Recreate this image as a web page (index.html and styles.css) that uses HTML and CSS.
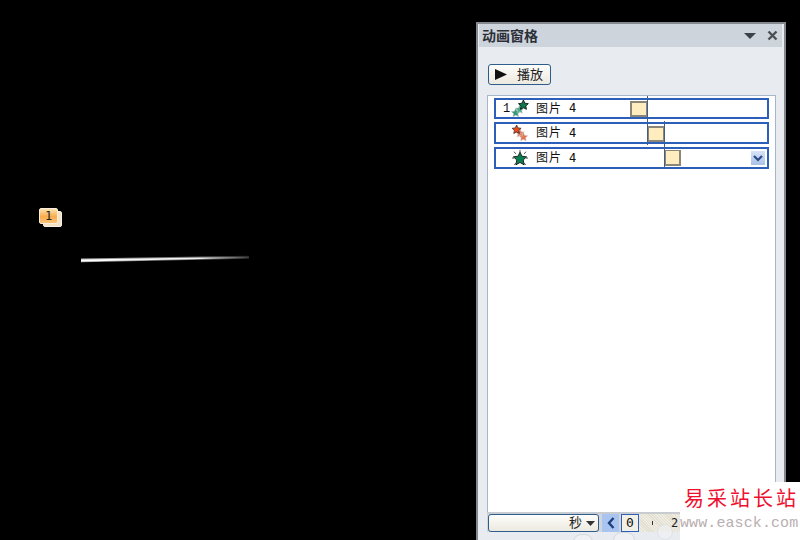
FILE: index.html
```html
<!DOCTYPE html>
<html lang="zh">
<head>
<meta charset="utf-8">
<title>动画窗格</title>
<link rel="stylesheet" href="styles.css">
</head>
<body>
<main class="desktop">
  <div class="badge-back"></div>
  <div class="badge">1</div>
  <svg class="streak" width="180" height="8" viewBox="0 0 180 8">
    <defs>
      <linearGradient id="streakFill" x1="0" x2="1" y1="0" y2="0">
        <stop offset="0" stop-color="#ffffff"/>
        <stop offset="0.7" stop-color="#f0f0f0"/>
        <stop offset="1" stop-color="#3a3a3a"/>
      </linearGradient>
      <linearGradient id="streakEdge" x1="0" x2="1" y1="0" y2="0">
        <stop offset="0" stop-color="#a8a8a8"/>
        <stop offset="0.7" stop-color="#707070"/>
        <stop offset="1" stop-color="#222"/>
      </linearGradient>
    </defs>
    <polygon points="1,3.600 169,0.800 169,3.800 1,7.200" fill="url(#streakEdge)"/>
    <polygon points="1,4.500 169,1.800 169,3 1,6.400" fill="url(#streakFill)"/>
  </svg>

  <section class="pane">
    <header class="pane-title">
      <span class="pane-name">动画窗格</span>
      <svg class="pane-menu" width="14" height="8" viewBox="0 0 14 8"><polygon points="1,1 13,1 7,7" fill="#3c4048"/></svg>
      <svg class="pane-close" width="11" height="11" viewBox="0 0 11 11"><path d="M1.5 1.5 9.5 9.5M9.5 1.5 1.5 9.5" stroke="#4a4e55" stroke-width="2.4"/></svg>
    </header>
    <div class="pane-body">
      <button class="play-btn" type="button">
        <svg width="14" height="11" viewBox="0 0 14 11"><polygon points="1,0 13,5.5 1,11" fill="#111"/></svg>
        <span>播放</span>
      </button>
      <div class="list">
        <div class="row row-first">
          <span class="num">1</span>
          <svg class="ico" viewBox="0 0 20 20">
            <polygon points="5,10 6.500,13.300 10,13.700 7.500,16 8.200,19.500 5,17.700 1.800,19.500 2.500,16 0,13.700 3.500,13.300" fill="#2f9b72" stroke="#a6b4bc" stroke-width="0.6"/>
            <polygon points="9.500,6 11,9.300 14.500,9.700 12,12 12.700,15.500 9.500,13.700 6.300,15.500 7,12 4.500,9.700 8,9.300" fill="#52ad8b" stroke="#b5c2c8" stroke-width="0.5"/>
            <polygon points="14,0 15.700,3.800 19.800,4.300 16.800,7 17.600,11 14,9 10.400,11 11.200,7 8.200,4.300 12.300,3.800" fill="#0d7a4e" stroke="#111" stroke-width="1"/>
          </svg>
          <span class="label">图片</span><span class="digit">4</span>
          <span class="block block-1"></span>
        </div>
        <div class="row">
          <span class="num"></span>
          <svg class="ico" viewBox="0 0 20 20">
            <polygon points="14,9 15.500,12.300 19,12.700 16.500,15 17.200,18.500 14,16.700 10.800,18.500 11.500,15 9,12.700 12.500,12.300" fill="#e2734f" stroke="#c9b4ac" stroke-width="0.5"/>
            <polygon points="10,4.500 11.500,7.800 15,8.200 12.500,10.500 13.200,14 10,12.200 6.800,14 7.500,10.500 5,8.200 8.500,7.800" fill="#d98a70" stroke="#c9b4ac" stroke-width="0.5"/>
            <polygon points="6,0 7.600,3.400 11.300,3.900 8.600,6.300 9.300,10 6,8.200 2.700,10 3.400,6.300 0.700,3.900 4.400,3.400" fill="#ee4a1e" stroke="#222" stroke-width="0.8"/>
          </svg>
          <span class="label">图片</span><span class="digit">4</span>
          <span class="block block-2"></span>
        </div>
        <div class="row row-selected">
          <span class="num"></span>
          <svg class="ico" viewBox="0 0 20 20">
            <path d="M3 2 5 4.500M17 2 15 4.500M10 0V2.500M0.500 9.500H3M19.500 9.500H17M3 17.500 5 15.500M17 17.500 15 15.500" stroke="#333" stroke-width="1"/>
            <polygon points="10,2.500 12.300,7.300 17.800,8 13.800,11.700 14.900,17.500 10,14.700 5.100,17.500 6.200,11.700 2.200,8 7.700,7.300" fill="#0a7d50" stroke="#111" stroke-width="1"/>
          </svg>
          <span class="label">图片</span><span class="digit">4</span>
          <span class="block block-3"></span>
          <span class="row-arrow">
            <svg width="10" height="7" viewBox="0 0 10 7"><path d="M1 1 5 5 9 1" fill="none" stroke="#2c4a86" stroke-width="2.200"/></svg>
          </span>
        </div>
        <span class="tick tick-1"></span>
        <span class="tick tick-2"></span>
      </div>
      <footer class="timebar">
        <div class="unit-select">
          <span class="unit">秒</span>
          <svg width="9" height="5" viewBox="0 0 9 5"><polygon points="0,0 9,0 4.500,5" fill="#333"/></svg>
        </div>
        <span class="nav-btn">
          <svg width="8" height="12" viewBox="0 0 8 12"><path d="M6.500 1 2 6 6.500 11" fill="none" stroke="#1f3f7c" stroke-width="2.400"/></svg>
        </span>
        <span class="zero">0</span>
        <div class="ruler"><span class="ruler-tick"></span><span class="ruler-num">2</span></div>
      </footer>
      <div class="under">
        <span class="ghost ghost-a"></span>
        <span class="ghost ghost-b"></span>
        <span class="ghost ghost-c"></span>
      </div>
    </div>
  </section>

  <aside class="mark">
    <div class="mark-cn">易采站长站</div>
    <div class="mark-en">www.easck.com</div>
  </aside>
</main>
</body>
</html>
```
FILE: styles.css
```css
* { box-sizing: border-box; }
html, body { margin: 0; padding: 0; background: #000; }
.desktop {
  position: relative;
  width: 800px;
  height: 540px;
  overflow: hidden;
  background: #000;
  font-family: "Noto Sans CJK SC", "Liberation Sans", sans-serif;
}
.badge, .badge-back {
  position: absolute;
  width: 19px;
  height: 16px;
  border-radius: 2px;
}
.badge-back {
  left: 43px;
  top: 211px;
  background: #f6e3c4;
  border: 1px solid #f4f1ea;
}
.badge {
  left: 39px;
  top: 208px;
  border: 1px solid #fbeedb;
  background: linear-gradient(#fde2b0, #f9ab4c 55%, #fbc57a);
  color: #222;
  font: 12px/14px "DejaVu Sans Mono", monospace;
  text-align: center;
}
.streak { position: absolute; left: 80px; top: 255px; }

.pane {
  position: absolute;
  left: 476px;
  top: 22px;
  width: 310px;
  height: 540px;
  display: flex;
  flex-direction: column;
  padding: 2px 2px 0 3px;
  background: #e8ecf1;
  box-shadow: inset 0 2px 0 #85898f, inset 2px 0 0 #85898f, inset -2px 0 0 #85898f;
}
.pane-title {
  display: flex;
  align-items: center;
  height: 23px;
  margin-right: 2px;
  padding-left: 3px;
  background: #ced4dc;
}
.pane-name {
  flex: 1;
  padding-bottom: 2px;
  font-size: 14px;
  font-weight: 700;
  color: #2b3038;
}
.pane-menu { margin-right: 10px; }
.pane-close { margin-right: 4px; }
.pane-body {
  display: flex;
  flex-direction: column;
  flex: 1;
  padding: 17px 8px 0 8px;
}
.play-btn {
  display: flex;
  align-items: center;
  width: 63px;
  height: 21px;
  margin: 0 0 10px 1px;
  padding: 0 0 0 5px;
  border: 1px solid #2d5d8c;
  border-radius: 3px;
  background: linear-gradient(#fdfdfb, #ece9df);
  font: 13px/1 "Noto Sans CJK SC", sans-serif;
  color: #222;
}
.play-btn span { margin-left: 9px; padding-bottom: 2px; }
.list {
  position: relative;
  display: flex;
  flex-direction: column;
  gap: 3px;
  width: 289px;
  height: 417px;
  padding: 2px 6px 0 6px;
  background: #fff;
  border: 1px solid #a7b5c8;
  border-bottom: 0;
}
.row {
  position: relative;
  display: flex;
  align-items: center;
  height: 22px;
  border: 2px solid #2b5fb9;
  background: #fff;
  font-size: 12px;
  color: #111;
}
.row-first { height: 21px; }
.num {
  width: 15px;
  padding-left: 7px;
  font: 12px/1 "Liberation Mono", monospace;
}
.ico { width: 18px; height: 17px; flex: none; }
.label { margin-left: 7px; width: 33px; padding-bottom: 3px; letter-spacing: 1px; }
.digit { padding-bottom: 1px; font: 12px/1 "DejaVu Sans Mono", monospace; }
.block {
  position: absolute;
  width: 18px;
  height: 16px;
  background: #ffedc0;
  border: 2px solid #8a8678;
}
.block-1 { left: 134px; top: 1px; }
.block-2 { left: 151px; top: 2px; }
.block-3 { left: 168px; top: 1px; width: 17px; border-width: 1px 2px 2px; }
.row-arrow {
  position: absolute;
  right: 2px;
  top: 2px;
  display: flex;
  align-items: center;
  justify-content: center;
  width: 14px;
  height: 14px;
  background: linear-gradient(#d8e3f6, #a9c0e8);
}
.tick {
  position: absolute;
  width: 1px;
  background: #3f5f86;
}
.tick-1 { left: 159px; top: 0; height: 49px; }
.tick-2 { left: 176px; top: 25px; height: 48px; }
.timebar {
  display: flex;
  align-items: center;
  height: 20px;
  width: 289px;
  background: #d2d6da;
  border-top: 2px solid #c8ccd0;
}
.unit-select {
  display: flex;
  align-items: center;
  justify-content: flex-end;
  width: 111px;
  height: 18px;
  margin-left: 1px;
  padding-right: 3px;
  border: 1px solid #2d5d8c;
  border-radius: 3px;
  background: linear-gradient(#fdfdfb, #ece9df);
}
.unit { margin-right: 4px; padding-bottom: 3px; font-size: 13px; line-height: 1; color: #222; }
.nav-btn {
  display: flex;
  align-items: center;
  justify-content: center;
  width: 17px;
  height: 18px;
  margin-left: 3px;
  background: #a9c4f0;
}
.zero {
  width: 18px;
  height: 18px;
  margin-left: 2px;
  border: 1px solid #2b5fb9;
  background: #f2efe6;
  text-align: center;
  font: 13px/16px "DejaVu Sans Mono", monospace;
  color: #111;
}
.ruler {
  display: flex;
  align-items: center;
  flex: 1;
  height: 18px;
  background: repeating-linear-gradient(45deg, #efece2 0 1px, #e2ded2 1px 2px);
  font: 12px/1 "DejaVu Sans Mono", monospace;
  color: #222;
}
.ruler-tick { width: 1px; height: 4px; margin-left: 13px; background: #333; }
.ruler-num { margin-left: 18px; }
.under {
  position: relative;
  flex: 1;
  background: #e8ecf1;
}
.ghost {
  position: absolute;
  border: 1px solid #d4d8dc;
  border-radius: 8px 8px 0 0;
  background: #eef0f3;
}
.ghost-a { left: 86px; top: 2px; width: 20px; height: 12px; }
.ghost-b { left: 126px; top: 0; width: 22px; height: 14px; }
.ghost-c {
  left: 170px;
  top: -8px;
  width: 16px;
  height: 16px;
  border-radius: 50%;
  border-color: #dcdfe2;
  background: #f0f1f3;
  opacity: 0.7;
}
.mark {
  position: absolute;
  left: 680px;
  top: 482px;
  width: 120px;
  height: 58px;
  background: #fff;
  overflow: hidden;
}
.mark-cn {
  padding-left: 4px;
  font-family: "Noto Sans CJK SC", sans-serif;
  font-size: 20px;
  line-height: 32px;
  letter-spacing: 3px;
  color: #ee1030;
  white-space: nowrap;
}
.mark-en {
  margin-top: 1px;
  font: 15px/18px "Liberation Mono", monospace;
  letter-spacing: 0.1px;
  color: #b9aeb0;
  white-space: nowrap;
}
```
